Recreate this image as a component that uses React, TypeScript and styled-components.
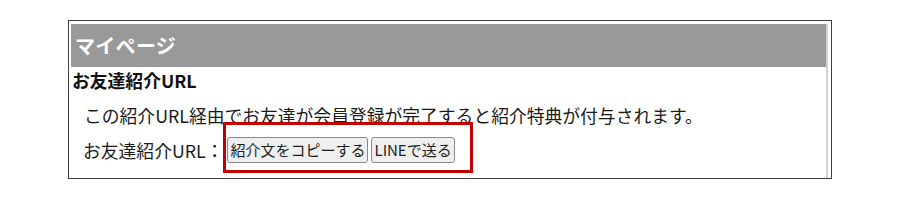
import React from "react";
import styled, { createGlobalStyle } from "styled-components";

const Global = createGlobalStyle`
  html, body { margin: 0; padding: 0; background: #ffffff; }
  body { font-family: "Noto Sans CJK JP", "Noto Sans", sans-serif; color: #1a1a1a; }
`;

const Page = styled.div`
  padding: 20px 0 0 68px;
`;

const Frame = styled.div`
  box-sizing: border-box;
  width: 764px;
  height: 159px;
  border: 1px solid #404040;
  padding: 3px 3px 0 2px;
  display: flex;
`;

const Inner = styled.div`
  flex: 1;
  border-right: 2px solid #d2d2d2;
  display: flex;
  flex-direction: column;
`;

const Header = styled.div`
  height: 43px;
  background: #999999;
  color: #ffffff;
  font-weight: 700;
  font-size: 20px;
  display: flex;
  align-items: center;
  padding-left: 4px;
  letter-spacing: 0.3px;
`;

const Heading = styled.div`
  font-weight: 700;
  font-size: 17.8px;
  line-height: 26px;
  padding-left: 1px;
  color: #111;
`;

const Para = styled.div`
  font-size: 17.8px;
  line-height: 26px;
  margin-top: 9px;
  padding-left: 13px;
`;

const Row = styled.div`
  display: flex;
  align-items: center;
  margin-top: 9px;
  padding-left: 12px;
  font-size: 17.8px;
`;

const Group = styled.div`
  position: relative;
  display: flex;
  gap: 3px;
  margin-left: 4px;
`;

const Highlight = styled.div`
  position: absolute;
  top: -15px;
  left: -4px;
  right: -18px;
  bottom: -10px;
  border: 3px solid #c00000;
  pointer-events: none;
`;

const Button = styled.button`
  font-family: "Noto Sans CJK JP", "Noto Sans", sans-serif;
  font-size: 15px;
  height: 26px;
  padding: 0 2px;
  background: #efefef;
  color: #1e1e1e;
  border: 1px solid #8a8a8a;
  border-radius: 3px;
  line-height: 22px;
`;

export default function App() {
  return (
    <Page>
      <Global />
      <Frame>
        <Inner>
          <Header>マイページ</Header>
          <Heading>お友達紹介URL</Heading>
          <Para>この紹介URL経由でお友達が会員登録が完了すると紹介特典が付与されます。</Para>
          <Row>
            <span>お友達紹介URL：</span>
            <Group>
              <Button>紹介文をコピーする</Button>
              <Button>LINEで送る</Button>
              <Highlight />
            </Group>
          </Row>
        </Inner>
      </Frame>
    </Page>
  );
}
